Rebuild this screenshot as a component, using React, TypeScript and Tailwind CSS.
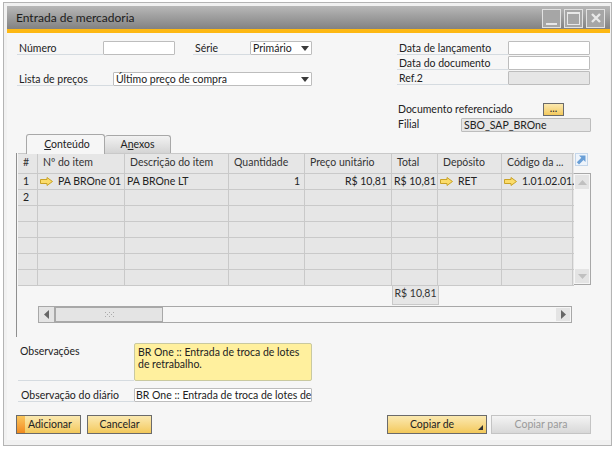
import type { ReactNode } from "react";

const columns = ["#", "Nº do item", "Descrição do item", "Quantidade", "Preço unitário", "Total", "Depósito", "Código da ..."];
const gridCols = "grid grid-cols-[20px_87px_104px_76px_87px_46px_64px_71px]";
const goldButton = "border border-[#6b6b6b] bg-gradient-to-b from-[#fbe9b0] to-[#f3c95a] text-[#222]";

function LinkArrow() {
  return (
    <svg width="13" height="9" viewBox="0 0 13 9" className="shrink-0">
      <path d="M0.5 2.5H7V0.5L12.5 4.5L7 8.5V6.5H0.5Z" fill="#fbdc6a" stroke="#c9a227" strokeWidth="1" />
    </svg>
  );
}

function Label({ width, children }: { width: string; children: ReactNode }) {
  return <div className={`${width} h-[14px] shrink-0 whitespace-nowrap border-b border-[#d5dbe0] pl-[2px] leading-[14px]`}>{children}</div>;
}

function Input({ width, disabled, children }: { width: string; disabled?: boolean; children?: ReactNode }) {
  return (
    <div className={`${width} h-[14px] shrink-0 rounded-[1px] border border-[#bdbdbd] pl-[2px] leading-[12px] ${disabled ? "bg-[#e6e6e6]" : "bg-white"}`}>
      {children}
    </div>
  );
}

function Select({ width, children }: { width: string; children: ReactNode }) {
  return (
    <div className={`${width} flex h-[14px] shrink-0 items-center justify-between rounded-[1px] border border-[#bdbdbd] bg-white pl-[2px] pr-[2px] leading-[12px]`}>
      <span>{children}</span>
      <svg width="8" height="5" viewBox="0 0 8 5"><path d="M0 0H8L4 5Z" fill="#3a3a3a" /></svg>
    </div>
  );
}

export default function App() {
  return (
    <div className="h-[450px] w-[615px] overflow-hidden bg-white pl-[3px] pt-[2px] text-[10.5px] text-[#222]" style={{ fontFamily: "Lato, sans-serif" }}>
      <div className="h-[444px] w-[609px] border border-[#b4b4b4] bg-[#f1f1f1] pl-[3px] pr-[1px] pt-[3px]">
        {/* Title bar */}
        <div className="flex h-[23px] items-center justify-between bg-gradient-to-b from-[#b8b8b8] to-[#828282] pl-[9px] pr-[5px]">
          <span className="text-[12px] text-[#1c1c1c]">Entrada de mercadoria</span>
          <div className="flex gap-[3px] pt-[1px]">
            <div className="flex h-[19px] w-[19px] items-end justify-center border border-[#e2e2e2] bg-[#a6a6a6] pb-[2px]"><div className="h-[2px] w-[11px] bg-[#e8e8e8]" /></div>
            <div className="flex h-[19px] w-[19px] items-center justify-center border border-[#e2e2e2] bg-[#a6a6a6]"><div className="h-[13px] w-[13px] border border-[#e8e8e8] border-t-2" /></div>
            <div className="flex h-[19px] w-[19px] items-center justify-center border border-[#e2e2e2] bg-[#a6a6a6]">
              <svg width="10" height="10" viewBox="0 0 10 10"><path d="M1 1L9 9M9 1L1 9" stroke="#e8e8e8" strokeWidth="2.4" /></svg>
            </div>
          </div>
        </div>
        <div className="h-[4px] bg-[#fdb813]" />

        {/* Body */}
        <div className="h-[407px] bg-[#f6f6f6]">
          {/* Header fields */}
          <div className="flex h-[101px] pt-[8px]">
            <div className="ml-[10px] w-[295px]">
              <div className="flex">
                <Label width="w-[86px]">Número</Label>
                <Input width="w-[72px]" />
                <div className="ml-[18px] flex">
                  <Label width="w-[57px]">Série</Label>
                  <Select width="w-[62px]">Primário</Select>
                </div>
              </div>
              <div className="mt-[17px] flex">
                <Label width="w-[96px]">Lista de preços</Label>
                <Select width="w-[199px]">Último preço de compra</Select>
              </div>
            </div>
            <div className="ml-[85px] w-[194px]">
              <div className="flex"><Label width="w-[111px]">Data de lançamento</Label><Input width="w-[82px]" /></div>
              <div className="mt-[1px] flex"><Label width="w-[111px]">Data do documento</Label><Input width="w-[82px]" /></div>
              <div className="mt-[1px] flex"><Label width="w-[111px]">Ref.2</Label><Input width="w-[82px]" disabled /></div>
              <div className="mt-[18px] flex h-[13px] items-center">
                <div className="w-[146px] pl-[1px]">Documento referenciado</div>
                <div className={`flex h-[13px] w-[21px] items-center justify-center pb-[3px] leading-none ${goldButton}`}>...</div>
              </div>
              <div className="mt-[2px] flex h-[13px] items-center">
                <div className="w-[64px] pl-[1px]">Filial</div>
                <Input width="w-[130px]" disabled>SBO_SAP_BROne</Input>
              </div>
            </div>
          </div>

          {/* Tabs */}
          <div className="ml-[19px] flex h-[19px] items-end">
            <div className="z-10 -mb-[1px] flex h-[20px] w-[79px] items-center justify-center rounded-t-[3px] border border-b-0 border-[#a8a8a8] bg-[#f6f6f6] pl-[3px]">
              <span><span className="underline">C</span>onteúdo</span>
            </div>
            <div className="flex h-[18px] w-[66px] items-center justify-center rounded-t-[3px] border border-b-0 border-l-0 border-[#a8a8a8] bg-gradient-to-b from-[#f2f2f2] to-[#d4d4d4]">
              <span>A<span className="underline">n</span>exos</span>
            </div>
          </div>

          {/* Matrix */}
          <div className="ml-[9px] h-[184px] border-l border-[#8f8f8f] pl-[1px]">
            <div className="flex">
              <div className="w-[556px]">
                <div className={`${gridCols} h-[21px] border-y border-[#c9c9c9] bg-[#e6e6e6] text-[#333]`}>
                  {columns.map((title) => (
                    <div key={title} className="truncate border-r border-[#c9c9c9] pl-[5px] pt-[1px]">{title}</div>
                  ))}
                </div>
                <div className={`${gridCols} h-[16px] border-b border-[#c9c9c9] bg-[#e6e6e6] leading-[15px]`}>
                  <div className="border-r border-[#c9c9c9] pl-[5px]">1</div>
                  <div className="flex items-center gap-[5px] whitespace-nowrap border-r border-[#c9c9c9] pl-[2px]"><LinkArrow />PA BROne 01</div>
                  <div className="border-r border-[#c9c9c9] pl-[2px]">PA BROne LT</div>
                  <div className="border-r border-[#c9c9c9] pr-[4px] text-right">1</div>
                  <div className="border-r border-[#c9c9c9] pr-[4px] text-right">R$ 10,81</div>
                  <div className="whitespace-nowrap border-r border-[#c9c9c9] pr-[1px] text-right">R$ 10,81</div>
                  <div className="flex items-center gap-[5px] border-r border-[#c9c9c9] pl-[2px]"><LinkArrow />RET</div>
                  <div className="flex items-center gap-[5px] whitespace-nowrap border-r border-[#c9c9c9] pl-[2px]"><LinkArrow />1.01.02.01.0</div>
                </div>
                {["2", "", "", "", "", ""].map((n, i) => (
                  <div key={i} className={`${gridCols} h-[16px] border-b border-[#c9c9c9] bg-[#e6e6e6] leading-[15px]`}>
                    <div className="border-r border-[#c9c9c9] pl-[5px]">{n}</div>
                    <div className="border-r border-[#c9c9c9]" />
                    <div className="border-r border-[#c9c9c9]" />
                    <div className="border-r border-[#c9c9c9]" />
                    <div className="border-r border-[#c9c9c9]" />
                    <div className="border-r border-[#c9c9c9]" />
                    <div className="border-r border-[#c9c9c9]" />
                    <div className="border-r border-[#c9c9c9]" />
                  </div>
                ))}
              </div>
              <div className="w-[17px]">
                <div className="h-[20px]">
                  <svg width="13" height="13" viewBox="0 0 13 13" className="ml-[1px]">
                    <rect x="0.5" y="0.5" width="12" height="12" fill="#eef4fb" stroke="#c4d6ea" />
                    <path d="M4 2.5H10.5V9L8.5 7L4 11.5L1.8 9.3L6.3 4.8Z" fill="#6a9fd6" />
                  </svg>
                </div>
                <div className="flex h-[112px] flex-col justify-between border-y border-r border-[#a8a8a8] bg-[#f6f6f6] p-[1px]">
                  <div className="flex h-[14px] items-center justify-center bg-[#e4e4e4]"><svg width="9" height="5" viewBox="0 0 9 5"><path d="M0 5H9L4.5 0Z" fill="#c0c0c0" /></svg></div>
                  <div className="flex h-[14px] items-center justify-center bg-[#e4e4e4]"><svg width="9" height="5" viewBox="0 0 9 5"><path d="M0 0H9L4.5 5Z" fill="#c0c0c0" /></svg></div>
                </div>
              </div>
            </div>

            {/* Totals row */}
            <div className="ml-[374px] flex h-[19px] w-[47px] items-center justify-center whitespace-nowrap border-b border-r border-l border-[#c9c9c9] bg-[#e6e6e6] pb-[2px] text-[#333]">R$ 10,81</div>

            {/* Horizontal scroll bar */}
            <div className="ml-[20px] mt-[1px] flex h-[17px] w-[534px] items-stretch justify-between border border-[#a8a8a8] bg-[#f6f6f6]">
              <div className="flex">
                <div className="flex w-[16px] items-center justify-center border-r border-[#a8a8a8] bg-[#e4e4e4]"><svg width="5" height="9" viewBox="0 0 5 9"><path d="M5 0V9L0 4.5Z" fill="#666" /></svg></div>
                <div className="flex w-[108px] items-center justify-center border border-[#a8a8a8] bg-[#e4e4e4]">
                  <svg width="9" height="7" viewBox="0 0 9 7"><path d="M0 1H1V2H0ZM4 1H5V2H4ZM8 1H9V2H8ZM2 3H3V4H2ZM6 3H7V4H6ZM0 5H1V6H0ZM4 5H5V6H4ZM8 5H9V6H8Z" fill="#aaa" /></svg>
                </div>
              </div>
              <div className="m-[1px] flex w-[14px] items-center justify-center bg-[#e4e4e4]"><svg width="5" height="9" viewBox="0 0 5 9"><path d="M0 0V9L5 4.5Z" fill="#666" /></svg></div>
            </div>
          </div>

          {/* Remarks */}
          <div className="ml-[11px] mt-[6px] flex h-[38px]">
            <div className="w-[116px] border-b border-[#d5dbe0] pl-[2px] pt-[1px]">Observações</div>
            <div className="w-[178px] rounded-[2px] border border-[#c9c9a0] bg-[#fff09e] pl-[3px] pt-[2px] leading-[12px]">
              BR One :: Entrada de troca de lotes
              <br />
              de retrabalho.
            </div>
          </div>
          <div className="ml-[11px] mt-[7px] flex h-[14px]">
            <Label width="w-[116px]"><span className="pl-[1px]">Observação do diário</span></Label>
            <div className="w-[178px] whitespace-nowrap rounded-[1px] border border-[#bdbdbd] bg-white pl-[1px] leading-[12px]">BR One :: Entrada de troca de lotes de</div>
          </div>

          {/* Bottom buttons */}
          <div className="ml-[9px] mt-[13px] flex h-[19px] w-[575px] justify-between">
            <div className="flex gap-[6px]">
              <div className={`flex h-[19px] w-[65px] items-center overflow-hidden ${goldButton}`}>
                <div className="h-full w-[8px] shrink-0 bg-gradient-to-b from-[#fbc75c] to-[#f08a1d]" />
                <span className="pl-[3px]">Adicionar</span>
              </div>
              <div className={`flex h-[19px] w-[65px] items-center justify-center ${goldButton}`}>Cancelar</div>
            </div>
            <div className="flex gap-[4px]">
              <div className={`relative flex h-[19px] w-[100px] items-center justify-center pr-[10px] ${goldButton}`}>
                Copiar de
                <svg width="5" height="5" viewBox="0 0 5 5" className="absolute bottom-[3px] right-[3px]"><path d="M5 0V5H0Z" fill="#333" /></svg>
              </div>
              <div className="flex h-[19px] w-[100px] items-center justify-center border border-[#c4c4c4] bg-gradient-to-b from-[#f4f4f4] to-[#d8d8d8] text-[#9a9a9a]">Copiar para</div>
            </div>
          </div>
        </div>
      </div>
    </div>
  );
}
